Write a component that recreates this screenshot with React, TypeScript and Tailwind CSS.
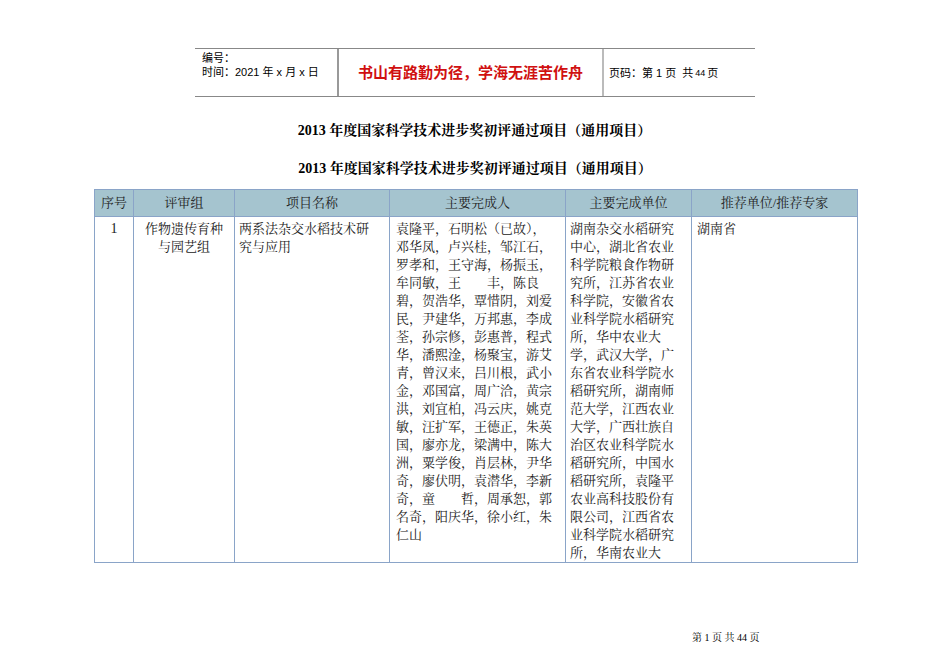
import React from "react";

const serif = { fontFamily: '"Liberation Serif","Noto Serif CJK SC","Noto Sans CJK SC",serif' };

const people = ["袁隆平，石明松（已故），","邓华凤，卢兴桂，邹江石，","罗孝和，王守海，杨振玉，","牟同敏，王　　丰，陈良","碧，贺浩华，覃惜阴，刘爱","民，尹建华，万邦惠，李成","荃，孙宗修，彭惠普，程式","华，潘熙淦，杨聚宝，游艾","青，曾汉来，吕川根，武小","金，邓国富，周广洽，黄宗","洪，刘宜柏，冯云庆，姚克","敏，汪扩军，王德正，朱英","国，廖亦龙，梁满中，陈大","洲，粟学俊，肖层林，尹华","奇，廖伏明，袁潜华，李新","奇，童　　哲，周承恕，郭","名奇，阳庆华，徐小红，朱","仁山"];
const units = ["湖南杂交水稻研究","中心，湖北省农业","科学院粮食作物研","究所，江苏省农业","科学院，安徽省农","业科学院水稻研究","所，华中农业大","学，武汉大学，广","东省农业科学院水","稻研究所，湖南师","范大学，江西农业","大学，广西壮族自","治区农业科学院水","稻研究所，中国水","稻研究所，袁隆平","农业高科技股份有","限公司，江西省农","业科学院水稻研究","所，华南农业大"];

const Lines = ({ l }: { l: string[] }) => <>{l.map((s, i) => <div key={i} className="whitespace-nowrap">{s}</div>)}</>;

export default function App() {
  return (
    <div className="w-[950px] h-[672px] bg-white relative" style={serif}>
      <div className="pt-[48px] pl-[195px]">
        <div className="w-[560px] h-[49px] border-t border-b border-[#888] flex text-[11px]" style={{ fontFamily: '"Liberation Sans","Noto Sans CJK SC",sans-serif' }}>
          <div className="w-[144px] border-r-2 border-[#999] pl-[7px] pt-[2px] leading-[14px]">
            <div>编号：</div>
            <div>时间：2021 年 x 月 x 日</div>
          </div>
          <div className="w-[265px] border-r-2 border-[#bbb] flex items-center justify-center text-[#d01010] text-[15px] font-bold pt-[2px]">书山有路勤为径，学海无涯苦作舟</div>
          <div className="flex-1 flex items-center pl-[5px] pt-[2px]">页码：第 1 页&nbsp; 共 <span className="text-[9px] mx-[2px]">44</span> 页</div>
        </div>
      </div>
      <div className="text-center font-bold text-[14px] ml-[-1px] mt-[25px] leading-[18px]">2013 年度国家科学技术进步奖初评通过项目（通用项目）</div>
      <div className="text-center font-bold text-[14px] mt-[20px] leading-[18px]">2013 年度国家科学技术进步奖初评通过项目（通用项目）</div>
      <div className="pl-[94px] mt-[11px]">
        <table className="border-collapse text-[13px] text-[#222]" style={{ tableLayout: "fixed", width: 763 }}>
          <colgroup>
            <col style={{ width: 39 }} /><col style={{ width: 101 }} /><col style={{ width: 155 }} /><col style={{ width: 176 }} /><col style={{ width: 126 }} /><col style={{ width: 166 }} />
          </colgroup>
          <thead>
            <tr className="bg-[#a5c4cf] h-[27px]">
              {["序号","评审组","项目名称","主要完成人","主要完成单位","推荐单位/推荐专家"].map(h => <th key={h} className="border border-[#8aa4c8] font-normal text-center">{h}</th>)}
            </tr>
          </thead>
          <tbody>
            <tr className="align-top leading-[18px]">
              <td className="border border-[#8aa4c8] text-center pt-[3px] text-[14px]">1</td>
              <td className="border border-[#8aa4c8] text-center pt-[3px]">作物遗传育种<br />与园艺组</td>
              <td className="border border-[#8aa4c8] px-[4px] pt-[3px]">两系法杂交水稻技术研<br />究与应用</td>
              <td className="border border-[#8aa4c8] px-[6px] pt-[3px] overflow-hidden"><Lines l={people} /></td>
              <td className="border border-[#8aa4c8] px-[4px] pt-[3px] pb-0 overflow-hidden"><Lines l={units} /></td>
              <td className="border border-[#8aa4c8] px-[5px] pt-[3px]">湖南省</td>
            </tr>
          </tbody>
        </table>
      </div>
      <div className="absolute left-[692px] top-[630px] text-[10px]">第 1 页 共 44 页</div>
    </div>
  );
}
